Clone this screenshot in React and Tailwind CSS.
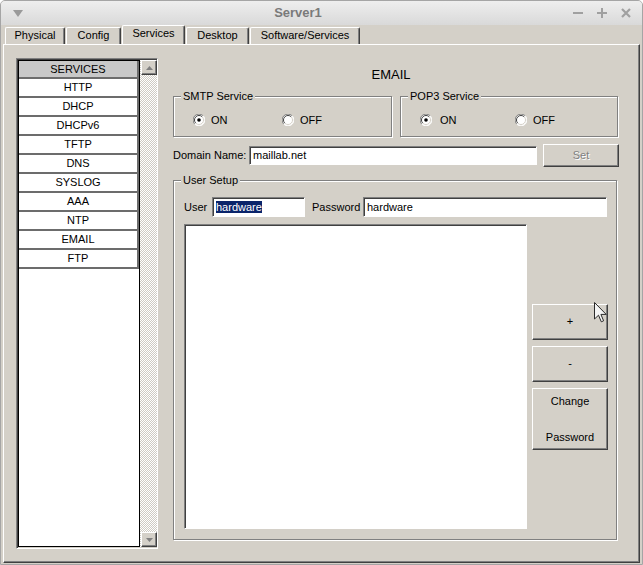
import React from "react";

const raised =
  "border border-t-white border-l-white border-r-[#404040] border-b-[#404040] shadow-[inset_-1px_-1px_0_#808080]";
const sunken =
  "border border-t-[#808080] border-l-[#808080] border-r-white border-b-white shadow-[inset_1px_1px_0_#404040]";
const etched =
  "border border-[#808080] shadow-[1px_1px_0_#ffffff,inset_1px_1px_0_#ffffff]";

function Radio({ checked }) {
  return (
    <svg width="12" height="12" viewBox="0 0 12 12" className="shrink-0">
      <circle cx="6" cy="6" r="5.5" fill="#ffffff" />
      <path d="M10.2 1.8 A5.9 5.9 0 0 0 1.8 10.2" stroke="#808080" fill="none" />
      <path d="M1.8 10.2 A5.9 5.9 0 0 0 10.2 1.8" stroke="#ffffff" fill="none" />
      <path d="M9.2 2.8 A4.5 4.5 0 0 0 2.8 9.2" stroke="#404040" fill="none" />
      <path d="M2.8 9.2 A4.5 4.5 0 0 0 9.2 2.8" stroke="#d4d0c8" fill="none" />
      {checked && <circle cx="6" cy="6" r="1.8" fill="#000000" />}
    </svg>
  );
}

function Tab({ label, width, selected }) {
  return (
    <div
      className={
        width +
        (selected ? " h-[19px] pb-[3px]" : " h-[17px] pb-[1px]") +
        " flex items-center justify-center rounded-t-[2px] border-t border-l border-r border-t-white border-l-white border-r-[#404040] shadow-[inset_-1px_0_0_#808080]"
      }
    >
      {label}
    </div>
  );
}

function ScrollBtn({ up }) {
  return (
    <div className={raised + " w-[16px] h-[15px] bg-[#d4d0c8] flex items-center justify-center"}>
      <svg width="7" height="4" viewBox="0 0 7 4">
        {up ? (
          <polygon points="3.5,0 7,4 0,4" fill="#808080" />
        ) : (
          <polygon points="0,0 7,0 3.5,4" fill="#808080" />
        )}
      </svg>
    </div>
  );
}

const services = ["HTTP", "DHCP", "DHCPv6", "TFTP", "DNS", "SYSLOG", "AAA", "NTP", "EMAIL", "FTP"];

export default function App() {
  return (
    <div className="relative w-[643px] h-[565px] bg-[#d4d0c8] border border-[#a5a5a5] rounded-t-[5px] overflow-hidden flex flex-col text-[11px] text-black [font-family:'Liberation_Sans',Arial,sans-serif]">
      {/* title bar */}
      <div className="h-[24px] shrink-0 flex items-center pl-[12px] pr-[11px] bg-gradient-to-b from-[#eeeeee] to-[#d9d9d9]">
        <svg width="10" height="7" viewBox="0 0 10 7">
          <polygon points="0,0 10,0 5,7" fill="#9a9a9a" />
        </svg>
        <div className="flex-1 text-center font-bold text-[13px] text-[#7a7a7a]">Server1</div>
        <div className="flex items-center gap-[14px]">
          <svg width="10" height="10" viewBox="0 0 10 10">
            <rect x="0" y="4" width="10" height="2" fill="#a0a0a0" />
          </svg>
          <svg width="10" height="10" viewBox="0 0 10 10">
            <rect x="0" y="4" width="10" height="2" fill="#a0a0a0" />
            <rect x="4" y="0" width="2" height="10" fill="#a0a0a0" />
          </svg>
          <svg width="10" height="10" viewBox="0 0 10 10">
            <path d="M1 1 L9 9 M9 1 L1 9" stroke="#a0a0a0" strokeWidth="2.2" />
          </svg>
        </div>
      </div>

      {/* tabs */}
      <div className="h-[19px] shrink-0 flex items-end pl-[4px] gap-[1px]">
        <Tab label="Physical" width="w-[60px]" />
        <Tab label="Config" width="w-[55px]" />
        <Tab label="Services" width="w-[63px]" selected />
        <Tab label="Desktop" width="w-[63px]" />
        <Tab label="Software/Services" width="w-[110px]" />
      </div>

      {/* panel */}
      <div className="mx-[2px] mb-[1px] flex-1 flex items-start pl-[12px] pt-[13px] border border-t-white border-l-white border-r-[#404040] border-b-[#404040] shadow-[inset_-1px_-1px_0_#808080]">
        {/* services list */}
        <div className={sunken + " w-[142px] h-[491px] flex pl-[1px] pt-[1px] pb-[1px] shrink-0"}>
          <div className="w-[122px] h-full border border-black bg-white flex flex-col">
            <div className="h-[18px] shrink-0 bg-[#c8c8c8] border-r-2 border-b-2 border-[#6c6c6c] flex items-center justify-center">
              SERVICES
            </div>
            {services.map((s) => (
              <div
                key={s}
                className="h-[19px] shrink-0 bg-white border-r-2 border-b-2 border-[#6c6c6c] flex items-center justify-center"
              >
                {s}
              </div>
            ))}
          </div>
          <div className="w-[17px] h-full pl-[1px] flex flex-col justify-between bg-[repeating-conic-gradient(#cfcbc3_0_25%,#ffffff_0_50%)] bg-[length:2px_2px]">
            <ScrollBtn up />
            <ScrollBtn />
          </div>
        </div>

        {/* right side */}
        <div className="ml-[15px] w-[446px] flex flex-col">
          <div className="mt-[9px] h-[16px] pr-[10px] flex items-center justify-center text-[13px]">EMAIL</div>

          <div className="mt-[7px] flex gap-[8px]">
            <fieldset className={etched + " w-[219px] h-[47px]"}>
              <legend className="ml-[7px] px-[2px] leading-[13px] bg-[#d4d0c8]">SMTP Service</legend>
              <div className="pl-[19px] pt-[9px] flex items-center">
                <div className="w-[89px] flex items-center gap-[6px]">
                  <Radio checked />
                  <span>ON</span>
                </div>
                <div className="flex items-center gap-[6px]">
                  <Radio />
                  <span>OFF</span>
                </div>
              </div>
            </fieldset>
            <fieldset className={etched + " w-[218px] h-[47px]"}>
              <legend className="ml-[7px] px-[2px] leading-[13px] bg-[#d4d0c8]">POP3 Service</legend>
              <div className="pl-[19px] pt-[9px] flex items-center">
                <div className="w-[95px] flex items-center gap-[8px]">
                  <Radio checked />
                  <span>ON</span>
                </div>
                <div className="flex items-center gap-[6px]">
                  <Radio />
                  <span>OFF</span>
                </div>
              </div>
            </fieldset>
          </div>

          <div className="mt-[7px] h-[23px] flex items-center">
            <div className="w-[76px]">Domain Name:</div>
            <div className={sunken + " w-[288px] h-[19px] bg-white flex items-center pl-[3px]"}>maillab.net</div>
            <div className={raised + " ml-[6px] w-[76px] h-[23px] flex items-center justify-center text-[#808080] [text-shadow:1px_1px_0_#ffffff]"}>
              Set
            </div>
          </div>

          <fieldset className={etched + " mt-[7px] w-[444px] h-[366px]"}>
            <legend className="ml-[7px] px-[2px] leading-[13px] bg-[#d4d0c8]">User Setup</legend>
            <div className="pl-[10px] pt-[10px] flex flex-col">
              <div className="h-[20px] flex items-center">
                <div className="w-[28px]">User</div>
                <div className={sunken + " w-[93px] h-[20px] bg-white flex items-center pl-[3px]"}>
                  <span className="bg-[#0a246a] text-white leading-[12px]">hardware</span>
                </div>
                <div className="ml-[7px] w-[51px]">Password</div>
                <div className={sunken + " w-[244px] h-[20px] bg-white flex items-center pl-[3px]"}>hardware</div>
              </div>
              <div className="mt-[7px] flex items-center">
                <div className={sunken + " w-[343px] h-[305px] bg-white"} />
                <div className="ml-[5px] flex flex-col gap-[6px]">
                  <div className={raised + " w-[76px] h-[36px] flex items-center justify-center"}>+</div>
                  <div className={raised + " w-[76px] h-[36px] flex items-center justify-center"}>-</div>
                  <div className={raised + " w-[76px] h-[62px] flex flex-col items-center justify-between pt-[4px] pb-[3px]"}>
                    <span>Change</span>
                    <span>Password</span>
                  </div>
                </div>
              </div>
            </div>
          </fieldset>
        </div>
      </div>

      {/* mouse cursor */}
      <svg
        className="absolute left-[593px] top-[301px]"
        width="14"
        height="22"
        viewBox="0 0 14 22"
      >
        <path
          d="M0.5 0.5 L0.5 17 L4.5 13.2 L7.3 19.8 L9.6 18.8 L6.9 12.4 L12.2 12.4 Z"
          fill="#f4f4f4"
          stroke="#2a2a2a"
          strokeWidth="1"
          strokeLinejoin="round"
        />
      </svg>
    </div>
  );
}
